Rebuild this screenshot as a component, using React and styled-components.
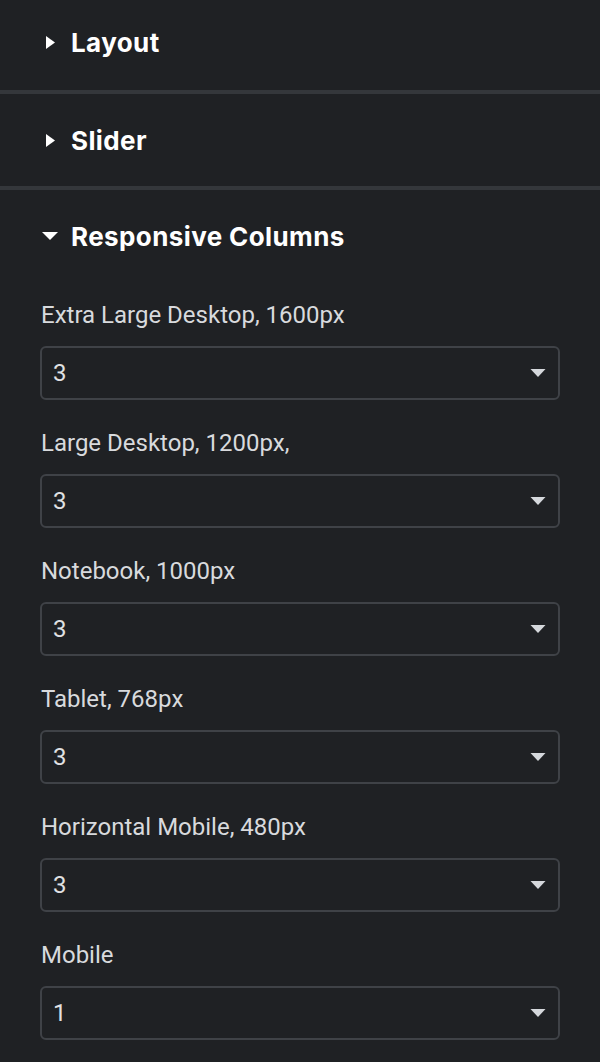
import React from "react";
import styled, { createGlobalStyle } from "styled-components";

const Global = createGlobalStyle`
  html, body { margin: 0; padding: 0; background: #1f2124; }
  body { font-family: Roboto, "Liberation Sans", sans-serif; -webkit-font-smoothing: antialiased; }
  * { box-sizing: border-box; }
`;

const Panel = styled.div`
  width: 600px;
  height: 1062px;
  overflow: hidden;
  background: #1f2124;
  display: flex;
  flex-direction: column;
`;

const Section = styled.section`
  border-top: ${(p) => (p.$first ? "none" : "4px solid #34373b")};
  margin-top: ${(p) => (p.$first ? "-2px" : "0")};
`;

const Header = styled.div`
  height: 92px;
  display: flex;
  align-items: center;
  padding-left: 41px;
  padding-bottom: ${(p) => (p.$first ? "3px" : "0")};
  gap: 12px;
  color: #ffffff;
  font-family: Inter, sans-serif;
  font-weight: 700;
  font-size: 26px;
  letter-spacing: 0.4px;
`;

const CaretBox = styled.span`
  width: 18px;
  height: 18px;
  display: flex;
  align-items: center;
  justify-content: center;
`;

const Body = styled.div`
  padding: 19px 40px 0 40px;
  display: flex;
  flex-direction: column;
`;

const Control = styled.div`
  display: flex;
  flex-direction: column;
  margin-bottom: 29px;
`;

const Label = styled.label`
  font-family: Roboto, "Liberation Sans", sans-serif;
  font-size: 24px;
  line-height: 28px;
  color: #d8dadd;
  padding-left: 1px;
  margin-bottom: 17px;
`;

const Select = styled.div`
  height: 54px;
  border: 2px solid #3f4247;
  border-radius: 6px;
  background: #1f2124;
  display: flex;
  align-items: center;
  justify-content: space-between;
  padding: 0 12px 0 11px;
  font-family: Roboto, "Liberation Sans", sans-serif;
  font-size: 24px;
  color: #e0e1e3;
`;

const Arrow = styled.svg`
  width: 16px;
  height: 8px;
  display: block;
`;

function CaretRight() {
  return (
    <CaretBox>
      <svg width="9" height="13" viewBox="0 0 9 13">
        <polygon points="0,0 9,6.5 0,13" fill="#ffffff" />
      </svg>
    </CaretBox>
  );
}

function CaretDown() {
  return (
    <CaretBox>
      <svg width="16" height="8" viewBox="0 0 16 8">
        <polygon points="0,0 16,0 8,8" fill="#ffffff" />
      </svg>
    </CaretBox>
  );
}

const controls = [
  ["Extra Large Desktop, 1600px", "3"],
  ["Large Desktop, 1200px,", "3"],
  ["Notebook, 1000px", "3"],
  ["Tablet, 768px", "3"],
  ["Horizontal Mobile, 480px", "3"],
  ["Mobile", "1"],
];

export default function App() {
  return (
    <>
      <Global />
      <Panel>
        <Section $first>
          <Header $first>
            <CaretRight />
            Layout
          </Header>
        </Section>
        <Section>
          <Header>
            <CaretRight />
            Slider
          </Header>
        </Section>
        <Section>
          <Header>
            <CaretDown />
            Responsive Columns
          </Header>
          <Body>
            {controls.map(([label, value]) => (
              <Control key={label}>
                <Label>{label}</Label>
                <Select>
                  <span>{value}</span>
                  <Arrow viewBox="0 0 16 8">
                    <polygon points="0.5,0 15.5,0 8,8" fill="#d5d8dc" />
                  </Arrow>
                </Select>
              </Control>
            ))}
          </Body>
        </Section>
      </Panel>
    </>
  );
}
